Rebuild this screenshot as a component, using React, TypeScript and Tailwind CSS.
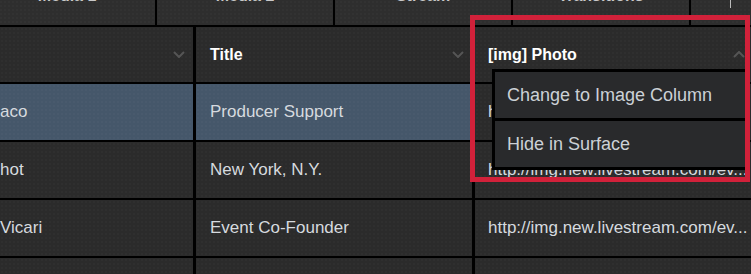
const tabs = ["Media 1", "Media 2", "Stream", "Transitions"];

const rows = [
  { name: "aco", title: "Producer Support", photo: "http://img.new.livestream.com/ev...", selected: true },
  { name: "hot", title: "New York, N.Y.", photo: "http://img.new.livestream.com/ev...", selected: false },
  { name: "Vicari", title: "Event Co-Founder", photo: "http://img.new.livestream.com/ev...", selected: false },
  { name: "", title: "", photo: "", selected: false },
];

function Chevron({ up = false }: { up?: boolean }) {
  return (
    <svg width="12" height="7" viewBox="0 0 12 7" className="shrink-0">
      <polyline
        points={up ? "1,6 6,1 11,6" : "1,1 6,6 11,1"}
        fill="none"
        stroke="#555555"
        strokeWidth="2"
      />
    </svg>
  );
}

const cell =
  "flex items-center overflow-hidden whitespace-nowrap bg-[#2b2b2b] bg-[radial-gradient(rgba(255,255,255,0.02)_1px,transparent_1px)] bg-[size:4px_4px]";

export default function App() {
  return (
    <div className="relative h-[274px] w-[751px] overflow-hidden bg-black font-['Liberation_Sans',Arial,sans-serif]">
      {/* tab strip, scrolled off the top */}
      <div className="-ml-[21px] flex h-[25px] gap-[2px]">
        {tabs.map((t) => (
          <div key={t} className={`${cell} w-[176px] shrink-0 flex-col !items-center !bg-[#2e2e2e]`}>
            <span className="-mt-[12px] text-[16px] font-bold leading-[16px] text-[#c9c9c9]">{t}</span>
          </div>
        ))}
        <div className={`${cell} flex-1 !items-start !bg-[#2e2e2e] pl-[22px]`}>
          <span className="-mt-[12px] text-[16px] leading-[16px] text-[#bbbbbb]">+</span>
          <span className="ml-[8px] h-[8px] w-[1px] bg-[#bbbbbb]" />
        </div>
      </div>

      {/* table */}
      <div className="mt-[2px] grid grid-cols-[193px_276px_1fr] gap-x-[3px] gap-y-[2px] bg-black">
        <div className={`${cell} h-[55px] justify-end pr-[8px]`}>
          <Chevron />
        </div>
        <div className={`${cell} h-[55px] justify-between pl-[14px] pr-[8px]`}>
          <span className="text-[16px] font-bold text-white">Title</span>
          <Chevron />
        </div>
        <div className={`${cell} h-[55px] justify-between pl-[13px] pr-[6px]`}>
          <span className="text-[16px] font-bold text-white">[img] Photo</span>
          <Chevron up />
        </div>

        {rows.map((r, i) => (
          <div key={i} className="contents">
            <div className={`${cell} h-[56px] text-[17px] text-[#d6dadf] ${r.selected ? "!bg-[#45576a]" : ""}`}>
              {r.name}
            </div>
            <div className={`${cell} h-[56px] pl-[14px] text-[17px] text-[#d6dadf] ${r.selected ? "!bg-[#45576a]" : ""}`}>
              {r.title}
            </div>
            <div className={`${cell} h-[56px] pl-[13px] text-[17px] text-[#d6dadf]`}>
              {r.photo}
            </div>
          </div>
        ))}
      </div>

      {/* column context menu */}
      <div className="absolute left-[492px] top-[69px] flex w-[256px] flex-col gap-[3px] border-[3px] border-black bg-black text-[18px] text-[#ccd1d6]">
        <div className="flex h-[46px] items-center bg-[#292a2c] pl-[12px]">Change to Image Column</div>
        <div className="flex h-[46px] items-center bg-[#292a2c] pl-[12px]">Hide in Surface</div>
      </div>

      {/* highlight frame */}
      <div className="absolute left-[470px] top-[15px] h-[167px] w-[280px] border-[5px] border-[#d1213a]" />
    </div>
  );
}
